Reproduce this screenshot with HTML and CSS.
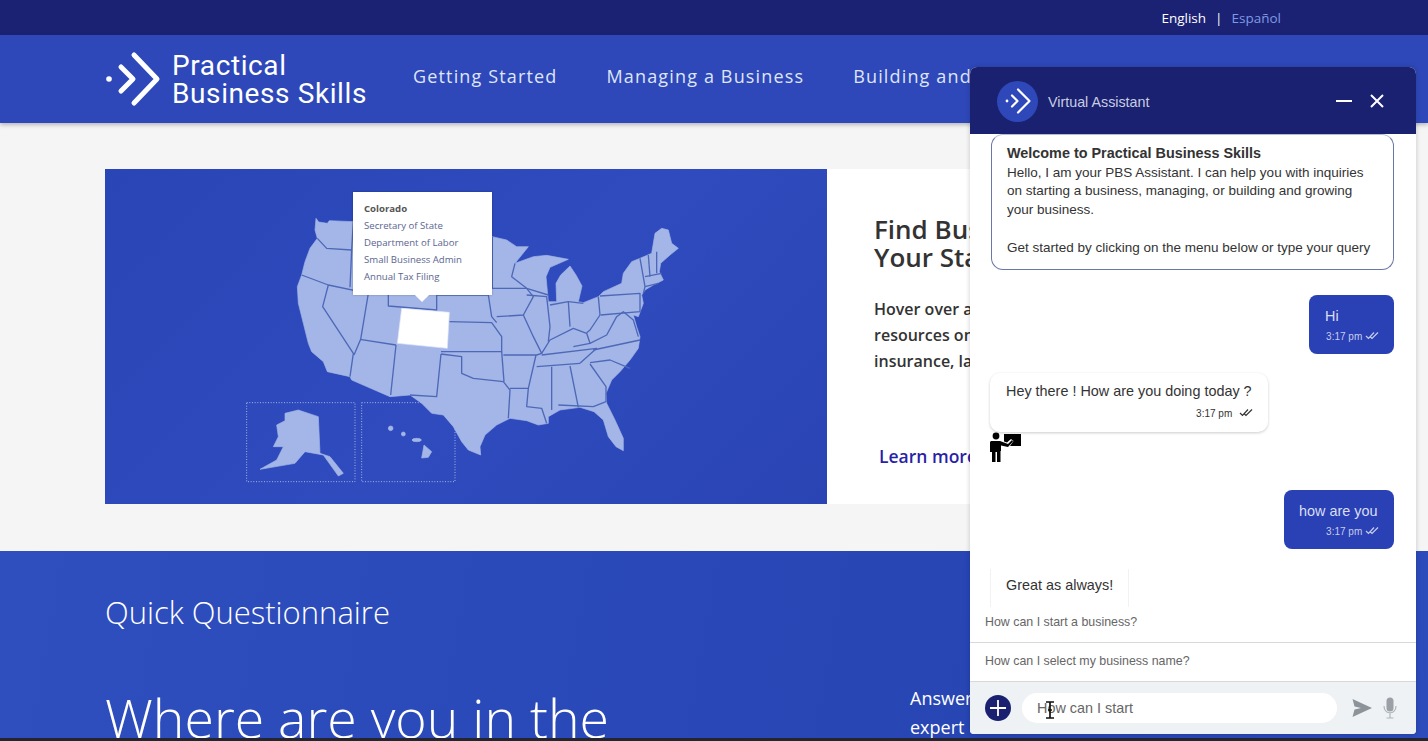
FILE: index.html
```html
<!DOCTYPE html>
<html>
<head>
<meta charset="utf-8">
<title>Practical Business Skills</title>
<link rel="stylesheet" href="styles.css">
</head>
<body>
<div class="page">

  <div class="topbar">
    <span class="lang">English</span><span class="lang-sep">|</span><span class="lang lang-off">Español</span>
  </div>

  <div class="header">
    <svg class="logo" width="56" height="56" viewBox="0 0 56 56">
      <circle cx="4" cy="28" r="2.8" fill="#fff"/>
      <path d="M16 16 L28 28 L16 40" fill="none" stroke="#fff" stroke-width="5" stroke-linecap="round" stroke-linejoin="round"/>
      <path d="M29 4 L52 28 L29 52" fill="none" stroke="#fff" stroke-width="5" stroke-linecap="round" stroke-linejoin="round"/>
    </svg>
    <div class="logo-text">Practical<br>Business Skills</div>
    <div class="nav">
      <span>Getting Started</span>
      <span>Managing a Business</span>
      <span>Building and</span>
    </div>
  </div>

  <div class="main">
    <div class="hero">
      <div class="hero-map">
        <svg class="map" width="722" height="335" viewBox="-405 -33 2166 1005">
          <g class="dots">
            <rect x="20" y="668" width="325" height="237"/>
            <rect x="365" y="668" width="280" height="237"/>
          </g>
          <path class="land" d="M228 115 L236 126 L262 130 L268 122 L340 125 L600 150 L757 170 L800 180 L830 200 L865 200 L825 250 L880 230 L920 226 L985 238 L930 262 L918 290 L925 365 L950 365 L948 310 L962 285 L990 258 L1008 285 L1026 318 L1015 365 L1030 368 L1075 350 L1090 335 L1145 310 L1150 280 L1175 245 L1200 235 L1235 220 L1245 160 L1265 145 L1285 150 L1295 190 L1315 205 L1290 225 L1262 250 L1258 275 L1270 300 L1240 315 L1215 330 L1205 345 L1210 370 L1195 410 L1180 405 L1190 440 L1200 470 L1195 505 L1170 540 L1140 575 L1115 600 L1098 640 L1100 670 L1125 720 L1150 775 L1150 812 L1128 800 L1105 770 L1090 720 L1062 695 L1020 682 L960 690 L925 710 L925 730 L895 735 L860 722 L810 715 L770 735 L735 765 L720 800 L722 825 L685 810 L665 785 L640 740 L610 705 L575 700 L545 670 L510 645 L450 650 L335 600 L330 590 L262 575 L250 545 L215 515 L205 490 L190 430 L175 370 L172 320 L185 285 L195 245 L210 205 L232 175 L225 150 Z"/>
          <path class="land" d="M135 700 L175 690 L235 710 L240 820 L270 830 L310 880 L295 888 L250 825 L195 815 L165 850 L60 868 L110 840 L130 800 L100 800 L115 770 L110 735 L135 722 Z"/>
          <g class="land">
            <circle cx="452" cy="745" r="7"/>
            <circle cx="490" cy="762" r="6"/>
            <ellipse cx="530" cy="780" rx="14" ry="5"/>
            <path d="M552 795 L575 815 L565 832 L545 834 Z"/>
          </g>
          <g class="lines">
            <path d="M232 175 L260 205 L335 210"/>
            <path d="M340 125 L335 210 L330 322"/>
            <path d="M185 285 L265 315 L385 340"/>
            <path d="M265 315 L248 380 L340 520 L330 590"/>
            <path d="M385 340 L362 478 L342 525"/>
            <path d="M360 478 L468 495"/>
            <path d="M445 340 L445 378 L590 390 L590 340"/>
            <path d="M468 495 L452 645"/>
            <path d="M510 645 L590 650 L603 522"/>
            <path d="M603 522 L665 530 L665 580 L700 595 L790 605 L810 630 L805 715"/>
            <path d="M628 425 L755 428 L785 470 L785 515 L603 515"/>
            <path d="M785 515 L792 605"/>
            <path d="M590 345 L745 345 L755 410 L770 428"/>
            <path d="M757 170 L757 325 L860 325 L880 350 L850 405 L770 410"/>
            <path d="M850 405 L880 470 L905 520 L890 525 L790 525"/>
            <path d="M888 525 L865 625 L810 625"/>
            <path d="M865 625 L860 680 L905 685 L920 730"/>
            <path d="M890 560 L1020 550"/>
            <path d="M935 560 L935 690"/>
            <path d="M990 558 L1015 682"/>
            <path d="M955 675 L1060 680 L1098 665 L1098 620 L1050 552"/>
            <path d="M1050 548 L1110 540 L1170 565"/>
            <path d="M905 525 L1070 505 L1020 550"/>
            <path d="M1060 510 L1200 480"/>
            <path d="M905 520 L930 480 L1000 445 L1040 460 L1050 490 L1000 500"/>
            <path d="M860 345 L920 350 L930 440 L925 485"/>
            <path d="M930 375 L985 365 L990 440"/>
            <path d="M985 365 L1030 370"/>
            <path d="M1075 350 L1080 405 L1050 450 L1040 458"/>
            <path d="M1050 490 L1100 465 L1130 410 L1150 395 L1180 420 L1195 470"/>
            <path d="M1082 405 L1200 395 L1200 340 L1080 348"/>
            <path d="M1200 235 L1215 320 L1210 340"/>
            <path d="M1225 225 L1230 290"/>
            <path d="M1250 215 L1250 280"/>
            <path d="M1215 290 L1265 280"/>
            <path d="M1215 320 L1255 310"/>
            <path d="M825 250 L815 290 L860 325 L925 345"/>
          </g>
          <path class="state-on" d="M485 385 L628 397 L622 505 L472 490 Z"/>
        </svg>
        <div class="tooltip">
          <b>Colorado</b>
          <span>Secretary of State</span>
          <span>Department of Labor</span>
          <span>Small Business Admin</span>
          <span>Annual Tax Filing</span>
        </div>
      </div>
      <div class="hero-text">
        <h2>Find Bus<br>Your Sta</h2>
        <p>Hover over a<br>resources on<br>insurance, la</p>
        <a class="more">Learn more</a>
      </div>
    </div>
  </div>

  <div class="quiz">
    <div class="quiz-left">
      <div class="quiz-label">Quick Questionnaire</div>
      <div class="quiz-title">Where are you in the</div>
    </div>
    <div class="quiz-right">Answer<br>expert</div>
  </div>
  <div class="strip"></div>

  <div class="chat">
    <div class="chat-head">
      <div class="avatar">
        <svg width="28" height="28" viewBox="0 0 28 28">
          <circle cx="3" cy="14" r="1.4" fill="#fff"/>
          <path d="M8 8.5 L13.5 14 L8 19.5" fill="none" stroke="#fff" stroke-width="2.2" stroke-linecap="round" stroke-linejoin="round"/>
          <path d="M14 2.5 L25.5 14 L14 25.5" fill="none" stroke="#fff" stroke-width="2.2" stroke-linecap="round" stroke-linejoin="round"/>
        </svg>
      </div>
      <div class="chat-title">Virtual Assistant</div>
      <svg class="chat-btn" width="18" height="14" viewBox="0 0 18 14"><path d="M1 7 H17" stroke="#fff" stroke-width="2"/></svg>
      <svg class="chat-btn" width="14" height="14" viewBox="0 0 14 14"><path d="M1 1 L13 13 M13 1 L1 13" stroke="#fff" stroke-width="2"/></svg>
    </div>

    <div class="chat-body">
      <div class="welcome">
        <b>Welcome to Practical Business Skills</b>
        <p>Hello, I am your PBS Assistant. I can help you with inquiries<br>on starting a business, managing, or building and growing<br>your business.</p>
        <p class="welcome-gap">Get started by clicking on the menu below or type your query</p>
      </div>

      <div class="msg msg-user msg-hi">
        <div>Hi</div>
        <div class="time">3:17 pm <svg width="14" height="9" viewBox="0 0 14 9"><path d="M1 5 L3.5 7.5 L9 1.5 M5.5 6 L7 7.5 L13 1.5" fill="none" stroke="#c6cdec" stroke-width="1.2"/></svg></div>
      </div>

      <div class="msg msg-bot">
        <div>Hey there ! How are you doing today ?</div>
        <div class="time">3:17 pm <svg class="tick" width="14" height="9" viewBox="0 0 14 9"><path d="M1 5 L3.5 7.5 L9 1.5 M5.5 6 L7 7.5 L13 1.5" fill="none" stroke="#333" stroke-width="1.2"/></svg></div>
      </div>
      <svg class="teacher" width="33" height="31" viewBox="0 0 33 31">
        <circle cx="7" cy="4" r="3.4" fill="#000"/>
        <path d="M2 9 H11 L19 12 L23 8 L24 9.500 L19 15 L12 13.500 V19 H11.500 V30 H8 V20 H6.500 V30 H3 V20 H1 V10 Z" fill="#000"/>
        <path d="M15 2 H32 V14 H21 L24.500 9 L22 7 L18 10.500 L15 9.500 Z" fill="#000"/>
      </svg>

      <div class="msg msg-user msg-how">
        <div>how are you</div>
        <div class="time">3:17 pm <svg width="14" height="9" viewBox="0 0 14 9"><path d="M1 5 L3.5 7.5 L9 1.5 M5.5 6 L7 7.5 L13 1.5" fill="none" stroke="#c6cdec" stroke-width="1.2"/></svg></div>
      </div>

      <div class="msg-great">Great as always!</div>
    </div>

    <div class="suggest suggest-first">How can I start a business?</div>
    <div class="suggest">How can I select my business name?</div>

    <div class="chat-input">
      <svg width="26" height="26" viewBox="0 0 26 26">
        <circle cx="13" cy="13" r="13" fill="#1a2170"/>
        <path d="M13 5 V21 M5 13 H21" stroke="#fff" stroke-width="1.800"/>
      </svg>
      <div class="pill">How can I start
        <svg class="ibeam" width="10" height="18" viewBox="0 0 10 18"><path d="M1 1 H9 M1 17 H9 M5 1 V17 M3 9 H7" fill="none" stroke="#111" stroke-width="1.700"/></svg>
      </div>
      <svg class="send" width="20" height="20" viewBox="0 0 20 20"><path d="M0.500 1 L20 10 L0.500 19 L2.500 11.500 L9 10 L2.500 8.500 Z" fill="#8d9499"/></svg>
      <svg width="14" height="22" viewBox="0 0 14 22">
        <rect x="3.500" y="0.500" width="7" height="14" rx="3.500" fill="#9aa0a5"/>
        <path d="M1 9 C1 18 13 18 13 9 M7 16 V21 M3.500 21 H10.500" fill="none" stroke="#b0b5b9" stroke-width="1.200"/>
      </svg>
    </div>
  </div>

</div>
</body>
</html>
```

FILE: styles.css
```css
body {
  margin: 0;
  font-family: "Open Sans", sans-serif;
  background: #f5f5f5;
}

.page {
  position: relative;
  width: 1428px;
  height: 741px;
  overflow: hidden;
  display: flex;
  flex-direction: column;
}

.topbar {
  height: 35px;
  background: #1b2273;
  color: #fff;
  font-size: 13.5px;
  display: flex;
  justify-content: flex-end;
  align-items: center;
  padding-right: 147px;
  flex-shrink: 0;
}

.lang-sep {
  margin: 0 9px;
}

.lang-off {
  color: #7e9ae2;
}

.header {
  height: 88px;
  background: #2e48b9;
  color: #fff;
  display: flex;
  align-items: center;
  padding-left: 105px;
  box-shadow: 0 2px 4px rgba(0, 0, 0, 0.25);
  position: relative;
  flex-shrink: 0;
}

.logo {
  flex-shrink: 0;
}

.logo-text {
  font-family: Roboto, sans-serif;
  font-size: 28px;
  line-height: 28px;
  letter-spacing: 0.6px;
  margin-left: 11px;
  margin-top: 2px;
  white-space: nowrap;
  width: 241px;
}

.nav {
  display: flex;
  gap: 49px;
  font-size: 18px;
  letter-spacing: 1.15px;
  color: #dfe5f7;
  white-space: nowrap;
  margin-top: -7px;
}

.main {
  height: 428px;
  padding: 46px 105px 47px;
  box-sizing: border-box;
  flex-shrink: 0;
}

.hero {
  height: 335px;
  display: flex;
  background: #fff;
}

.hero-map {
  position: relative;
  width: 722px;
  height: 335px;
  background: linear-gradient(135deg, #2a45b6 0%, #2f4bbd 55%, #2a44b4 100%);
  flex-shrink: 0;
}

.map {
  display: block;
}

.land {
  fill: #a3b6e7;
  stroke: #a3b6e7;
  stroke-width: 2;
  stroke-linejoin: round;
}

.lines path {
  fill: none;
  stroke: #4e68b8;
  stroke-width: 4;
  stroke-linejoin: round;
}

.state-on {
  fill: #fff;
  stroke: #dfe5f7;
  stroke-width: 2;
}

.dots rect {
  fill: none;
  stroke: #a3b6e7;
  stroke-width: 3;
  stroke-dasharray: 3 5;
}

.tooltip {
  position: absolute;
  left: 248px;
  top: 23px;
  width: 139px;
  height: 103px;
  box-sizing: border-box;
  padding: 8px 11px 0;
  background: #fff;
  box-shadow: 0 0 2px rgba(0, 0, 0, 0.3);
  display: flex;
  flex-direction: column;
  font-size: 9.6px;
  line-height: 17px;
  color: #5a6590;
  white-space: nowrap;
}

.tooltip b {
  color: #555;
}

.tooltip::after {
  content: "";
  position: absolute;
  left: 64px;
  bottom: -5px;
  width: 10px;
  height: 10px;
  background: #fff;
  transform: rotate(45deg);
}

.hero-text {
  padding: 46px 0 0 47px;
  white-space: nowrap;
  color: #333;
}

.hero-text h2 {
  margin: 0;
  font-size: 26px;
  line-height: 28px;
  font-weight: 600;
}

.hero-text p {
  margin: 25px 0 0;
  font-size: 16px;
  line-height: 26px;
  font-weight: 600;
}

.more {
  display: block;
  margin: 70px 0 0 5px;
  font-size: 17.5px;
  font-weight: 600;
  color: #2a1fa8;
}

.quiz {
  height: 187px;
  background: linear-gradient(100deg, #2f4fbf 0%, #2745b3 70%, #2c4cbc 100%);
  color: #fff;
  display: flex;
  justify-content: space-between;
  padding: 40px 0 0 105px;
  box-sizing: border-box;
  overflow: hidden;
  flex-shrink: 0;
}

.quiz-label {
  font-size: 31px;
  font-weight: 300;
  line-height: 42px;
}

.quiz-title {
  font-size: 53.6px;
  font-weight: 300;
  line-height: 60px;
  margin-top: 55px;
  white-space: nowrap;
}

.quiz-right {
  width: 60px;
  margin-right: 458px;
  font-size: 18px;
  line-height: 29px;
  padding-top: 93px;
  white-space: nowrap;
  flex-shrink: 0;
}

.strip {
  height: 3px;
  background: #23262e;
  flex-shrink: 0;
}

.chat {
  position: absolute;
  left: 970px;
  top: 67px;
  width: 446px;
  height: 667px;
  background: #fff;
  border-radius: 7px 7px 4px 4px;
  overflow: hidden;
  box-shadow: 0 0 5px rgba(0, 0, 0, 0.2);
  display: flex;
  flex-direction: column;
  font-family: "Liberation Sans", Arial, sans-serif;
}

.chat-head {
  height: 67px;
  background: #1a2170;
  display: flex;
  align-items: center;
  padding: 0 32px 0 27px;
  flex-shrink: 0;
}

.avatar {
  width: 41px;
  height: 41px;
  border-radius: 50%;
  background: #2e48b9;
  display: flex;
  align-items: center;
  justify-content: center;
  margin-top: 1px;
}

.chat-title {
  flex: 1;
  margin-left: 10px;
  margin-top: 2px;
  font-size: 14.3px;
  color: #c8cde2;
}

.chat-btn {
  margin-left: 17px;
}

.chat-body {
  flex: 1;
  min-height: 0;
  padding: 0 22px 0 20px;
  display: flex;
  flex-direction: column;
  color: #333;
  overflow: hidden;
}

.welcome {
  margin-left: 1px;
  height: 136px;
  box-sizing: border-box;
  border: 1px solid #6a78a8;
  border-top-color: #b5bcd2;
  border-radius: 12px;
  padding: 9px 15px 0;
  font-size: 13.5px;
  line-height: 18.7px;
  white-space: nowrap;
  flex-shrink: 0;
}

.welcome b {
  font-size: 14.4px;
  display: block;
  margin-bottom: 1px;
}

.welcome p {
  margin: 0;
}

.welcome-gap {
  margin-top: 18.7px !important;
}

.msg {
  box-sizing: border-box;
  height: 59px;
  font-size: 14.4px;
  flex-shrink: 0;
}

.msg-user {
  align-self: flex-end;
  background: #2a40b5;
  color: #d9def4;
  border-radius: 8px;
  padding: 13px 15px 0 16px;
}

.msg-hi {
  width: 85px;
  margin-top: 25px;
}

.msg-how {
  width: 110px;
  margin-top: 27px;
  padding-left: 15px;
}

.time {
  font-size: 10px;
  margin-top: 7px;
  text-align: right;
  white-space: nowrap;
}

.msg-user .time {
  color: #c6cdec;
}

.msg-bot {
  align-self: flex-start;
  width: 278px;
  margin-top: 19px;
  border-radius: 10px;
  background: #fff;
  box-shadow: 0 1px 3px rgba(0, 0, 0, 0.2);
  padding: 10px 15px 0 16px;
}

.msg-bot .time {
  margin-top: 9px;
}

.tick {
  margin-left: 4px;
}

.teacher {
  display: block;
  margin: 0 0 0 -1px;
  flex-shrink: 0;
}

.msg-great {
  align-self: flex-start;
  box-sizing: border-box;
  width: 139px;
  height: 40px;
  margin-top: 20px;
  padding: 8px 0 0 15px;
  font-size: 14.4px;
  white-space: nowrap;
  border-left: 1px solid #f2f2f2;
  border-right: 1px solid #f2f2f2;
  flex-shrink: 0;
}

.suggest {
  height: 39px;
  line-height: 37px;
  padding-left: 15px;
  font-size: 12.4px;
  color: #666;
  border-bottom: 1px solid #d6d8da;
  box-sizing: border-box;
  flex-shrink: 0;
}

.suggest-first {
  height: 36px;
  line-height: 31px;
}

.chat-input {
  height: 52px;
  background: #eef2f5;
  display: flex;
  align-items: center;
  padding: 0 18px 0 15px;
  flex-shrink: 0;
}

.pill {
  position: relative;
  width: 300px;
  height: 30px;
  margin-left: 11px;
  padding-left: 15px;
  background: #fff;
  border-radius: 15px;
  font-size: 14.4px;
  line-height: 30px;
  color: #666;
}

.ibeam {
  position: absolute;
  left: 23px;
  top: 8px;
}

.send {
  margin-left: 15px;
  margin-right: 11px;
}
```
